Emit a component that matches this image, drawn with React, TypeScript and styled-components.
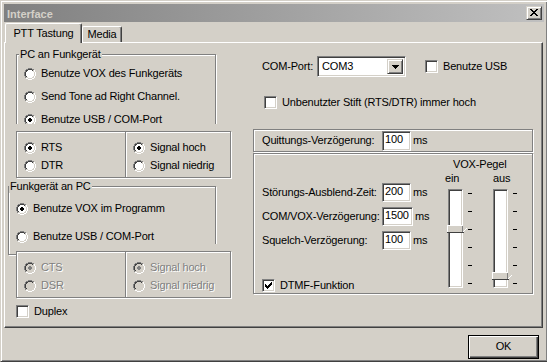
import React from "react";
import styled, { createGlobalStyle, css } from "styled-components";

const FACE = "#d4d0c8";
const SHADOW = "#808080";
const DARK = "#404040";
const HI = "#ffffff";

const GlobalStyle = createGlobalStyle`
  html, body { margin: 0; padding: 0; background: #ffffff; }
  body {
    font-family: "Liberation Sans", Arial, Helvetica, sans-serif;
    font-size: 11px;
    line-height: 13px;
    letter-spacing: -0.17px;
    color: #000000;
  }
  #root { width: 547px; height: 364px; overflow: hidden; }
  *, *::before, *::after { box-sizing: border-box; }
`;

type Colors = Record<string, string>;

function Pixels({ rows, colors, x = 0, y = 0 }: { rows: string[]; colors: Colors; x?: number; y?: number }) {
  const out: React.ReactNode[] = [];
  rows.forEach((row, r) => {
    let c = 0;
    while (c < row.length) {
      const ch = row[c];
      if (!colors[ch]) {
        c++;
        continue;
      }
      let e = c;
      while (e < row.length && row[e] === ch) e++;
      out.push(<rect key={`${r}-${c}`} x={x + c} y={y + r} width={e - c} height={1} fill={colors[ch]} />);
      c = e;
    }
  });
  return <>{out}</>;
}

const RADIO_RING = [
  "....gggg....",
  "..ggddddgg..",
  ".gddiiiidlh.",
  ".gdiiiiiilh.",
  "gdiiiiiiiilh",
  "gdiiiiiiiilh",
  "gdiiiiiiiilh",
  "gdiiiiiiiilh",
  ".gdiiiiiilh.",
  ".glliiiillh.",
  "..hhllllhh..",
  "....hhhh....",
];
const BULLET = [".bb.", "bbbb", "bbbb", ".bb."];
const CHECK = [
  "......x",
  ".....xx",
  "x...xxx",
  "xx.xxx.",
  "xxxxx..",
  ".xxx...",
  "..x....",
];
const CLOSE_X = [
  "xx....xx",
  ".xx..xx.",
  "..xxxx..",
  "...xx...",
  "..xxxx..",
  ".xx..xx.",
  "xx....xx",
];
const ARROW = ["xxxxxxx", ".xxxxx.", "..xxx..", "...x..."];
const THUMB = [
  "hhhhhhhhhhhhhhhh....",
  "hllllllllllllllg....",
  "hllllllllllllllg....",
  "hllllllllllllllg...h",
  "hllllllllllllllg..h.",
  "hllllllllllllllg.h..",
  "hllllllllllllllgh...",
  "ddddddddddddddddd...",
];

/* ---------- frame ---------- */

const Window = styled.div`
  width: 548px;
  height: 362px;
  background: ${FACE};
  border: 1px solid;
  border-color: ${FACE} ${DARK} ${DARK} ${FACE};
  box-shadow: inset 1px 1px 0 ${HI}, inset -1px -1px 0 ${SHADOW};
  padding: 3px;
  display: flex;
  flex-direction: column;
`;

const TitleBar = styled.div`
  height: 18px;
  flex: none;
  display: flex;
  align-items: flex-start;
  justify-content: space-between;
  padding: 0 2px 0 3px;
  background: linear-gradient(to right, #808080, #c0c0c0);
`;

const TitleText = styled.span`
  margin-top: 4px;
  font-weight: bold;
  letter-spacing: 0;
  color: ${FACE};
  white-space: nowrap;
`;

const CaptionButton = styled.div`
  width: 16px;
  height: 14px;
  margin-top: 2px;
  background: ${FACE};
  border: 1px solid;
  border-color: ${FACE} ${DARK} ${DARK} ${FACE};
  box-shadow: inset 1px 1px 0 ${HI}, inset -1px -1px 0 ${SHADOW};
  padding: 2px 0 0 3px;
  svg { display: block; }
`;

/* ---------- tabs ---------- */

const TabStrip = styled.div`
  height: 20px;
  flex: none;
  display: flex;
  align-items: flex-end;
  padding-left: 1px;
  position: relative;
  z-index: 1;
`;

const Tab = styled.div<{ $active?: boolean; $w: number }>`
  width: ${(p) => p.$w}px;
  background: ${FACE};
  border-left: 1px solid ${HI};
  border-top: 1px solid ${HI};
  border-right: 1px solid ${DARK};
  box-shadow: inset -1px 0 0 ${SHADOW};
  border-top-left-radius: 2px;
  border-top-right-radius: 2px;
  white-space: nowrap;
  text-align: center;
  ${(p) =>
    p.$active
      ? css`
          height: 20px;
          margin-bottom: -1px;
          padding-top: 3px;
        `
      : css`
          height: 16px;
          padding-top: 1px;
        `}
`;

const Panel = styled.div`
  width: 539px;
  height: 286px;
  flex: none;
  border: 1px solid;
  border-color: ${HI} ${DARK} ${DARK} ${HI};
  box-shadow: inset -1px -1px 0 ${SHADOW};
  display: grid;
  grid-template-columns: 224px 280px;
  column-gap: 21px;
  align-items: start;
  padding-left: 3px;
`;

const Footer = styled.div`
  flex: 1;
  display: flex;
  justify-content: flex-end;
  align-items: flex-start;
  padding: 7px 5px 0 0;
`;

const DefaultButton = styled.div`
  width: 71px;
  height: 24px;
  border: 1px solid #000;
  box-shadow: inset 1px 1px 0 ${HI}, inset -1px -1px 0 ${DARK}, inset -2px -2px 0 ${SHADOW};
  display: flex;
  align-items: center;
  justify-content: center;
  padding-bottom: 1px;
`;

/* ---------- left column ---------- */

const LeftCol = styled.div`
  display: flex;
  flex-direction: column;
  align-items: flex-start;
`;

const GroupBox = styled.div`
  position: relative;
  border: 1px solid ${SHADOW};
  box-shadow: inset 1px 1px 0 ${HI}, 1px 1px 0 ${HI};
  display: flex;
  flex-direction: column;
  align-items: flex-start;
`;

const PcGroup = styled(GroupBox)`
  width: 200px;
  margin: 11px 0 0 8px;
  padding: 12px 0 0 7px;
  gap: 10px;
`;

const RadioGroup = styled(GroupBox)`
  width: 208px;
  margin-top: 8px;
  padding: 15px 0 11px 7px;
  gap: 15px;
`;

const Legend = styled.span<{ $left: number }>`
  position: absolute;
  top: -7px;
  left: ${(p) => p.$left}px;
  padding: 0 1px;
  background: ${FACE};
  white-space: nowrap;
`;

const FrameWrap = styled.div<{ $mt: number }>`
  position: relative;
  margin: ${(p) => p.$mt}px 0 0 8px;
  padding-top: 7px;
  background: ${FACE};
`;

const PairFrame = styled.div`
  width: 215px;
  display: grid;
  grid-template-columns: 108px 1fr;
  border: 1px solid ${SHADOW};
  box-shadow: inset 1px 1px 0 ${HI}, 1px 1px 0 ${HI};
`;

const PairCell = styled.div<{ $divider?: boolean }>`
  display: flex;
  flex-direction: column;
  gap: 5px;
  padding: 9px 0 5px 7px;
  ${(p) =>
    p.$divider &&
    css`
      border-left: 1px solid ${SHADOW};
      box-shadow: inset 1px 0 0 ${HI};
    `}
`;

const Option = styled.div<{ $disabled?: boolean }>`
  display: flex;
  align-items: center;
  height: 13px;
  gap: 5px;
  white-space: nowrap;
  color: ${(p) => (p.$disabled ? SHADOW : "#000")};
  text-shadow: ${(p) => (p.$disabled ? `1px 1px 0 ${HI}` : "none")};
`;

const DuplexRow = styled(Option)`
  margin: 7px 0 0 8px;
`;

const RadioSvg = styled.svg`
  display: block;
  flex: none;
`;

const CheckBoxBox = styled.span`
  width: 13px;
  height: 13px;
  flex: none;
  border: 1px solid;
  border-color: ${SHADOW} ${HI} ${HI} ${SHADOW};
  box-shadow: inset 1px 1px 0 ${DARK}, inset -1px -1px 0 ${FACE};
  background: ${HI};
  padding: 2px;
  svg { display: block; }
`;

/* ---------- right column ---------- */

const RightCol = styled.div`
  display: flex;
  flex-direction: column;
  align-items: flex-start;
`;

const ComRow = styled.div`
  display: flex;
  align-items: center;
  margin: 13px 0 0 9px;
  white-space: nowrap;
`;

const FieldLabel = styled.span<{ $w: number }>`
  width: ${(p) => p.$w}px;
  flex: none;
  white-space: nowrap;
`;

const Combo = styled.div`
  width: 89px;
  height: 21px;
  border: 1px solid;
  border-color: ${SHADOW} ${HI} ${HI} ${SHADOW};
  box-shadow: inset 1px 1px 0 ${DARK}, inset -1px -1px 0 ${FACE};
  background: ${HI};
  display: flex;
  align-items: stretch;
  padding: 2px;
  margin-right: 19px;
`;

const ComboText = styled.span`
  flex: 1;
  padding: 1px 0 0 2px;
  line-height: 13px;
`;

const ComboButton = styled.span`
  width: 16px;
  flex: none;
  background: ${FACE};
  border: 1px solid;
  border-color: ${FACE} ${DARK} ${DARK} ${FACE};
  box-shadow: inset 1px 1px 0 ${HI}, inset -1px -1px 0 ${SHADOW};
  display: flex;
  align-items: center;
  justify-content: center;
  svg { display: block; }
`;

const PinRow = styled(Option)`
  margin: 19px 0 0 11px;
`;

const EtchedBox = styled.div`
  width: 280px;
  border: 1px solid ${SHADOW};
  box-shadow: inset 1px 1px 0 ${HI}, 1px 1px 0 ${HI};
`;

const AckBox = styled(EtchedBox)`
  height: 23px;
  margin-top: 20px;
  display: flex;
  align-items: center;
  padding-left: 8px;
`;

const TextBox = styled.div<{ $w: number; $h: number }>`
  width: ${(p) => p.$w}px;
  height: ${(p) => p.$h}px;
  flex: none;
  border: 1px solid;
  border-color: ${SHADOW} ${HI} ${HI} ${SHADOW};
  box-shadow: inset 1px 1px 0 ${DARK}, inset -1px -1px 0 ${FACE};
  background: ${HI};
  padding: 1px 0 0 2px;
  line-height: 12px;
`;

const Unit = styled.span`
  margin-left: 2px;
`;

const VoxBox = styled(EtchedBox)`
  height: 141px;
  margin-top: 1px;
  display: grid;
  grid-template-columns: 190px 1fr;
`;

const VoxFields = styled.div`
  display: flex;
  flex-direction: column;
  align-items: flex-start;
  padding: 29px 0 0 8px;
  gap: 5px;
`;

const FieldRow = styled.div`
  display: flex;
  align-items: center;
  white-space: nowrap;
`;

const DtmfRow = styled(Option)`
  margin-top: 24px;
`;

const VoxLevels = styled.div`
  display: flex;
  flex-direction: column;
  align-items: flex-start;
  padding-top: 4px;
`;

const VoxTitle = styled.span`
  margin-left: 9px;
  white-space: nowrap;
`;

const SliderRow = styled.div`
  display: flex;
  margin-top: 1px;
`;

const SliderCol = styled.div<{ $w: number }>`
  width: ${(p) => p.$w}px;
  display: flex;
  flex-direction: column;
  align-items: flex-start;
`;

const SliderLabel = styled.span<{ $ml: number }>`
  margin-left: ${(p) => p.$ml}px;
`;

const TrackRow = styled.div<{ $ml: number }>`
  display: flex;
  align-items: flex-start;
  margin: 4px 0 0 ${(p) => p.$ml}px;
`;

const Track = styled.div`
  position: relative;
  width: 15px;
  height: 99px;
  border: 1px solid;
  border-color: ${SHADOW} ${HI} ${HI} ${SHADOW};
  box-shadow: inset 1px 1px 0 ${DARK}, inset -1px -1px 0 ${FACE};
  background: ${HI};
`;

const ThumbSvg = styled.svg<{ $top: number }>`
  position: absolute;
  left: -2px;
  top: ${(p) => p.$top}px;
  display: block;
`;

const Ticks = styled.div`
  display: flex;
  flex-direction: column;
  gap: 17px;
  padding-top: 4px;
  margin-left: 5px;
`;

const Tick = styled.span`
  display: block;
  width: 4px;
  height: 1px;
  background: #000;
`;

/* ---------- widgets ---------- */

function Radio({ label, checked, disabled }: { label: string; checked?: boolean; disabled?: boolean }) {
  return (
    <Option $disabled={disabled}>
      <RadioSvg width={12} height={12} viewBox="0 0 12 12" shapeRendering="crispEdges">
        <Pixels rows={RADIO_RING} colors={{ g: SHADOW, d: DARK, h: HI, l: FACE, i: disabled ? FACE : HI }} />
        {checked && <Pixels rows={BULLET} x={4} y={4} colors={{ b: disabled ? SHADOW : "#000" }} />}
      </RadioSvg>
      <span>{label}</span>
    </Option>
  );
}

function CheckBox({ checked }: { checked?: boolean }) {
  return (
    <CheckBoxBox>
      <svg width={7} height={7} viewBox="0 0 7 7" shapeRendering="crispEdges">
        {checked && <Pixels rows={CHECK} colors={{ x: "#000" }} />}
      </svg>
    </CheckBoxBox>
  );
}

function Slider({ thumbTop }: { thumbTop: number }) {
  return (
    <>
      <Track>
        <ThumbSvg $top={thumbTop} width={20} height={8} viewBox="0 0 20 8" shapeRendering="crispEdges">
          <Pixels rows={THUMB} colors={{ h: HI, l: FACE, g: SHADOW, d: DARK }} />
        </ThumbSvg>
      </Track>
      <Ticks>
        {[0, 1, 2, 3, 4, 5].map((i) => (
          <Tick key={i} />
        ))}
      </Ticks>
    </>
  );
}

function PairBox({
  left,
  right,
  mt,
  disabled,
}: {
  left: [string, string];
  right: [string, string];
  mt: number;
  disabled?: boolean;
}) {
  return (
    <FrameWrap $mt={mt}>
      <PairFrame>
        <PairCell>
          <Radio label={left[0]} checked disabled={disabled} />
          <Radio label={left[1]} disabled={disabled} />
        </PairCell>
        <PairCell $divider>
          <Radio label={right[0]} checked disabled={disabled} />
          <Radio label={right[1]} disabled={disabled} />
        </PairCell>
      </PairFrame>
    </FrameWrap>
  );
}

export default function App() {
  return (
    <>
      <GlobalStyle />
      <Window>
        <TitleBar>
          <TitleText>Interface</TitleText>
          <CaptionButton>
            <svg width={8} height={7} viewBox="0 0 8 7" shapeRendering="crispEdges">
              <Pixels rows={CLOSE_X} colors={{ x: "#000" }} />
            </svg>
          </CaptionButton>
        </TitleBar>

        <TabStrip>
          <Tab $active $w={77}>PTT Tastung</Tab>
          <Tab $w={40}>Media</Tab>
        </TabStrip>

        <Panel>
          <LeftCol>
            <PcGroup>
              <Legend $left={2}>PC an Funkgerät</Legend>
              <Radio label="Benutze VOX des Funkgeräts" />
              <Radio label="Send Tone ad Right Channel." />
              <Radio label="Benutze USB / COM-Port" checked />
            </PcGroup>
            <PairBox mt={-3} left={["RTS", "DTR"]} right={["Signal hoch", "Signal niedrig"]} />

            <RadioGroup>
              <Legend $left={0}>Funkgerät an PC</Legend>
              <Radio label="Benutze VOX im Programm" checked />
              <Radio label="Benutze USB / COM-Port" />
            </RadioGroup>
            <PairBox mt={-11} disabled left={["CTS", "DSR"]} right={["Signal hoch", "Signal niedrig"]} />

            <DuplexRow>
              <CheckBox />
              <span>Duplex</span>
            </DuplexRow>
          </LeftCol>

          <RightCol>
            <ComRow>
              <FieldLabel $w={55}>COM-Port:</FieldLabel>
              <Combo>
                <ComboText>COM3</ComboText>
                <ComboButton>
                  <svg width={7} height={4} viewBox="0 0 7 4" shapeRendering="crispEdges">
                    <Pixels rows={ARROW} colors={{ x: "#000" }} />
                  </svg>
                </ComboButton>
              </Combo>
              <Option>
                <CheckBox />
                <span>Benutze USB</span>
              </Option>
            </ComRow>

            <PinRow>
              <CheckBox />
              <span>Unbenutzter Stift (RTS/DTR) immer hoch</span>
            </PinRow>

            <AckBox>
              <FieldLabel $w={120}>Quittungs-Verzögerung:</FieldLabel>
              <TextBox $w={29} $h={20}>100</TextBox>
              <Unit>ms</Unit>
            </AckBox>

            <VoxBox>
              <VoxFields>
                <FieldRow>
                  <FieldLabel $w={120}>Störungs-Ausblend-Zeit:</FieldLabel>
                  <TextBox $w={29} $h={19}>200</TextBox>
                  <Unit>ms</Unit>
                </FieldRow>
                <FieldRow>
                  <FieldLabel $w={120}>COM/VOX-Verzögerung:</FieldLabel>
                  <TextBox $w={31} $h={19}>1500</TextBox>
                  <Unit>ms</Unit>
                </FieldRow>
                <FieldRow>
                  <FieldLabel $w={120}>Squelch-Verzögerung:</FieldLabel>
                  <TextBox $w={29} $h={19}>100</TextBox>
                  <Unit>ms</Unit>
                </FieldRow>
                <DtmfRow>
                  <CheckBox checked />
                  <span>DTMF-Funktion</span>
                </DtmfRow>
              </VoxFields>

              <VoxLevels>
                <VoxTitle>VOX-Pegel</VoxTitle>
                <SliderRow>
                  <SliderCol $w={49}>
                    <SliderLabel $ml={1}>ein</SliderLabel>
                    <TrackRow $ml={4}>
                      <Slider thumbTop={35} />
                    </TrackRow>
                  </SliderCol>
                  <SliderCol $w={40}>
                    <SliderLabel $ml={0}>aus</SliderLabel>
                    <TrackRow $ml={0}>
                      <Slider thumbTop={82} />
                    </TrackRow>
                  </SliderCol>
                </SliderRow>
              </VoxLevels>
            </VoxBox>
          </RightCol>
        </Panel>

        <Footer>
          <DefaultButton>OK</DefaultButton>
        </Footer>
      </Window>
    </>
  );
}
